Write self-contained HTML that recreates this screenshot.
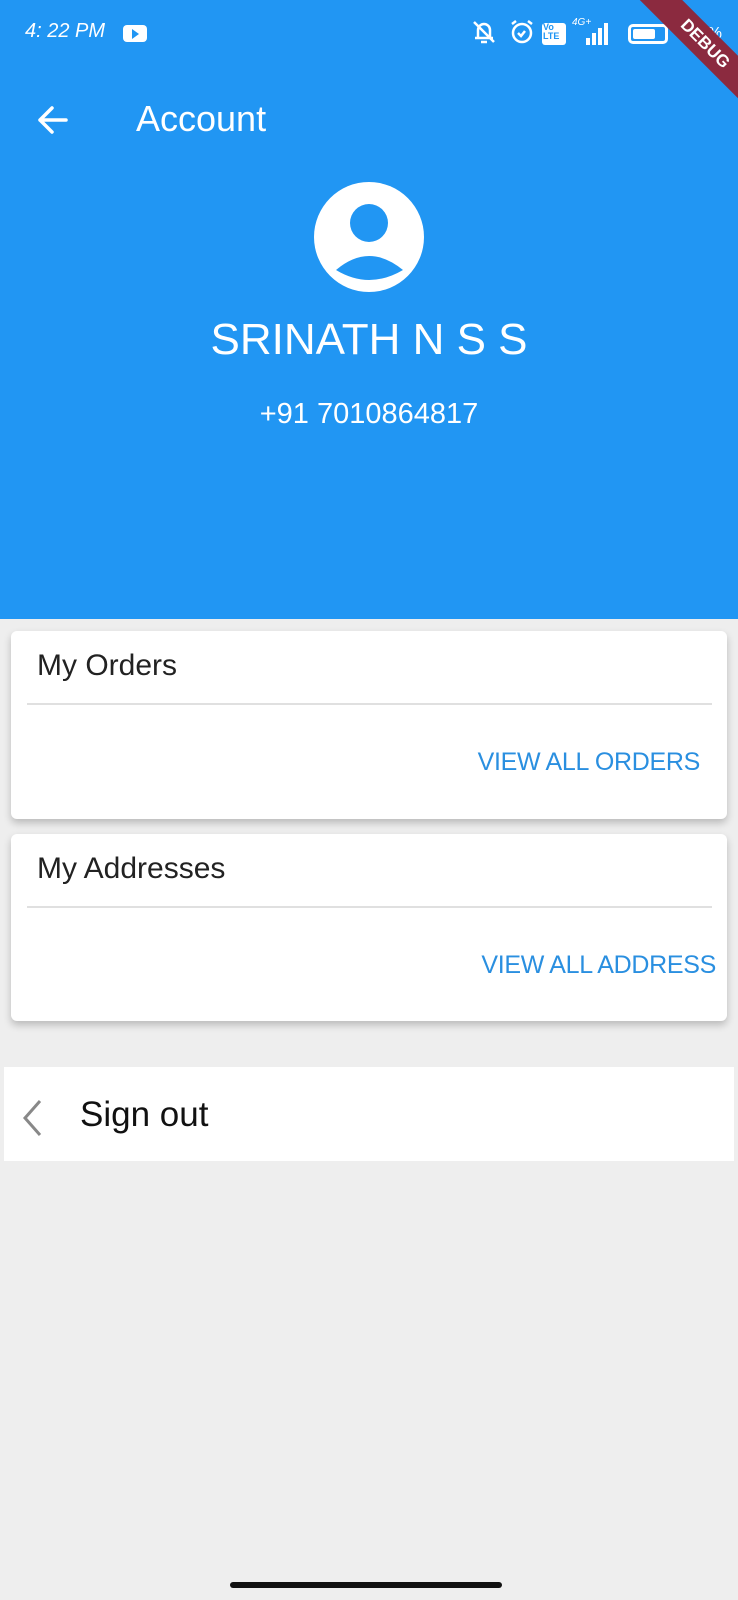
<!DOCTYPE html>
<html><head><meta charset="utf-8"><style>
*{margin:0;padding:0;box-sizing:border-box}
body{width:738px;height:1600px;background:#eeeeee;font-family:"Liberation Sans",sans-serif;position:relative;overflow:hidden}
.hdr{position:absolute;left:0;top:0;width:738px;height:619px;background:#2196f3}
.abs{position:absolute;white-space:nowrap}
.card{position:absolute;left:11px;width:716px;background:#fff;border-radius:6px;box-shadow:0 4px 8px rgba(0,0,0,.22)}
.div{position:absolute;left:16px;width:685px;height:2px;background:#e0e0e0}
.ttl{position:absolute;left:26px;font-size:30px;color:#222;letter-spacing:0}
.btn{position:absolute;font-size:25px;color:#2a8fe0;letter-spacing:-0.3px}
</style></head><body>
<div class="hdr"></div>
<div class="abs" style="left:25px;top:20px;font-size:20px;color:#fff;font-style:italic">4: 22 PM</div>
<div class="abs" style="left:123px;top:25px;width:24px;height:17px;background:#fff;border-radius:4px"></div>
<svg class="abs" style="left:129px;top:28px" width="12" height="12"><path d="M3 1L10 6L3 11Z" fill="#2196f3"/></svg>
<svg class="abs" style="left:470px;top:18px" width="160" height="30" fill="none" stroke="#fff" stroke-width="2.5">
<path d="M8 20V12a6 6 0 0 1 12 0v8h3H5M4 4l20 20M11 24h6"/>
<circle cx="52" cy="15" r="9"/><path d="M48 15l3 3 4-5M42 6l4-3M62 6l-4-3"/>
<rect x="72" y="5" width="24" height="22" rx="3" fill="#fff" stroke="none"/>
<path d="M118 27V20M124 27V15M130 27V10M136 27V5" stroke-width="4"/>
</svg>
<div class="abs" style="left:543px;top:23px;font-size:9px;color:#2196f3;font-weight:bold;line-height:9px">Vo<br>LTE</div>
<div class="abs" style="left:572px;top:17px;font-size:10px;color:#fff;font-style:italic">4G+</div>
<div class="abs" style="left:628px;top:24px;width:40px;height:20px;border:3px solid #fff;border-radius:5px"></div>
<div class="abs" style="left:633px;top:29px;width:22px;height:10px;background:#fff;border-radius:2px"></div>
<div class="abs" style="left:690px;top:25px;font-size:16px;color:#fff">75%</div>
<div class="abs" style="left:620px;top:29px;width:170px;height:30px;background:#8b2a3f;transform:rotate(45deg);transform-origin:center;color:#fff;font-weight:bold;font-size:17px;text-align:center;line-height:30px">DEBUG</div>
<svg class="abs" style="left:36px;top:104px" width="34" height="32" fill="none" stroke="#fff" stroke-width="3.5" stroke-linecap="round" stroke-linejoin="round"><path d="M30 16H4M16 4L4 16l12 12"/></svg>
<div class="abs" style="left:136px;top:98px;font-size:36px;color:#fff">Account</div>
<svg class="abs" style="left:314px;top:182px" width="110" height="110"><circle cx="55" cy="55" r="55" fill="#fff"/><circle cx="55" cy="41" r="19" fill="#2196f3"/><path d="M22 88Q55 60 89 88Q55 108 22 88Z" fill="#2196f3"/></svg>
<div class="abs" style="left:0;width:738px;text-align:center;top:315px;font-size:44px;color:#fff">SRINATH N S S</div>
<div class="abs" style="left:0;width:738px;text-align:center;top:398px;font-size:29px;color:#fff">+91 7010864817</div>
<div class="card" style="top:631px;height:188px">
<div class="ttl" style="top:18px">My Orders</div>
<div class="div" style="top:72px"></div>
<div class="btn" style="right:27px;top:117px">VIEW ALL ORDERS</div>
</div>
<div class="card" style="top:834px;height:187px">
<div class="ttl" style="top:18px">My Addresses</div>
<div class="div" style="top:72px"></div>
<div class="btn" style="right:11px;top:117px">VIEW ALL ADDRESS</div>
</div>
<div class="abs" style="left:4px;top:1067px;width:730px;height:94px;background:#fff"></div>
<svg class="abs" style="left:20px;top:1098px" width="24" height="40" fill="none" stroke="#888" stroke-width="3"><path d="M20 3L5 20l15 17"/></svg>
<div class="abs" style="left:80px;top:1095px;font-size:35px;color:#111">Sign out</div>
<div class="abs" style="left:230px;top:1582px;width:272px;height:6px;background:#111;border-radius:3px"></div>
</body></html>
